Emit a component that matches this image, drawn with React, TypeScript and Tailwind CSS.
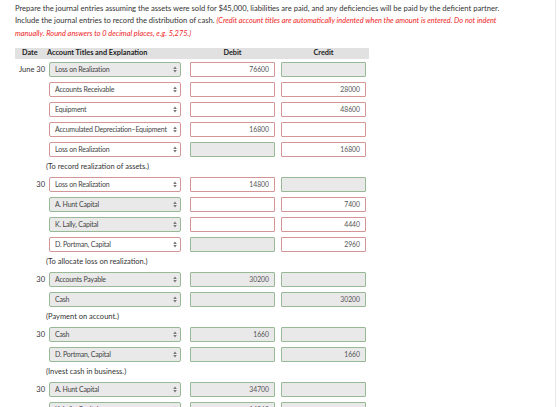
type Tone = "ok" | "bad"

type Line = {
  date?: string
  account: string
  accountTone: Tone
  debit: string
  debitTone: Tone
  credit: string
  creditTone: Tone
}

type Entry = { lines: Line[]; memo?: string }

const ENTRIES: Entry[] = [
  {
    lines: [
      { date: "June 30", account: "Loss on Realization", accountTone: "ok", debit: "76600", debitTone: "bad", credit: "", creditTone: "ok" },
      { account: "Accounts Receivable", accountTone: "bad", debit: "", debitTone: "bad", credit: "28000", creditTone: "bad" },
      { account: "Equipment", accountTone: "bad", debit: "", debitTone: "bad", credit: "48600", creditTone: "bad" },
      { account: "Accumulated Depreciation–Equipment", accountTone: "bad", debit: "16800", debitTone: "bad", credit: "", creditTone: "bad" },
      { account: "Loss on Realization", accountTone: "bad", debit: "", debitTone: "ok", credit: "16800", creditTone: "bad" },
    ],
    memo: "(To record realization of assets.)",
  },
  {
    lines: [
      { date: "30", account: "Loss on Realization", accountTone: "bad", debit: "14800", debitTone: "bad", credit: "", creditTone: "ok" },
      { account: "A. Hunt Capital", accountTone: "ok", debit: "", debitTone: "bad", credit: "7400", creditTone: "bad" },
      { account: "K. Lally, Capital", accountTone: "ok", debit: "", debitTone: "bad", credit: "4440", creditTone: "bad" },
      { account: "D. Portman, Capital", accountTone: "bad", debit: "", debitTone: "ok", credit: "2960", creditTone: "bad" },
    ],
    memo: "(To allocate loss on realization.)",
  },
  {
    lines: [
      { date: "30", account: "Accounts Payable", accountTone: "ok", debit: "30200", debitTone: "ok", credit: "", creditTone: "ok" },
      { account: "Cash", accountTone: "ok", debit: "", debitTone: "ok", credit: "30200", creditTone: "ok" },
    ],
    memo: "(Payment on account.)",
  },
  {
    lines: [
      { date: "30", account: "Cash", accountTone: "ok", debit: "1660", debitTone: "ok", credit: "", creditTone: "ok" },
      { account: "D. Portman, Capital", accountTone: "ok", debit: "", debitTone: "ok", credit: "1660", creditTone: "ok" },
    ],
    memo: "(Invest cash in business.)",
  },
  {
    lines: [
      { date: "30", account: "A. Hunt Capital", accountTone: "ok", debit: "34700", debitTone: "ok", credit: "", creditTone: "ok" },
      { account: "K. Lally, Capital", accountTone: "ok", debit: "14360", debitTone: "ok", credit: "", creditTone: "ok" },
    ],
  },
]

// green = accepted field, red = field flagged for review
const box = (tone: Tone) =>
  tone === "ok"
    ? "border-[#98b996] bg-[#e9e9e9]"
    : "border-[#d39596] bg-white"

function Arrows() {
  return (
    <svg width="4" height="7" viewBox="0 0 4 7" className="shrink-0">
      <path d="M2 0.5 L3.8 3 L0.2 3 Z" fill="#777" />
      <path d="M2 6.5 L3.8 4 L0.2 4 Z" fill="#777" />
    </svg>
  )
}

function AccountSelect({ value, tone }: { value: string; tone: Tone }) {
  return (
    <div className={`ml-[4px] flex h-[15px] w-[132px] items-center justify-between rounded-[2px] border pl-[5px] pr-[3px] ${box(tone)}`}>
      <span className="text-[7px] tracking-[-0.2px] text-[#444]">{value}</span>
      <Arrows />
    </div>
  )
}

function Amount({ value, tone, className }: { value: string; tone: Tone; className: string }) {
  return (
    <div className={`flex h-[15px] w-[85px] items-center justify-end rounded-[1px] border pr-[5px] text-[6.8px] text-[#555] ${box(tone)} ${className}`}>
      {value}
    </div>
  )
}

export default function App() {
  return (
    <div className="h-[407px] w-[560px] overflow-hidden bg-white font-['Lato','Open_Sans',sans-serif] text-[#333]">
      <div className="h-full w-[556px] border-r border-[#e8e8e8] pl-[15px] pt-[2px]">
        <p className="text-[7.6px] leading-[12px]">
          Prepare the journal entries assuming the assets were sold for $45,000, liabilities are paid, and any deficiencies will be paid by the deficient partner.
          <br />
          Include the journal entries to record the distribution of cash.{" "}
          <span className="text-[7.4px] italic text-[#ee1c25]">
            (Credit account titles are automatically indented when the amount is entered. Do not indent
            <br />
            manually. Round answers to 0 decimal places, e.g. 5,275.)
          </span>
        </p>

        <div className="mt-[8px] flex h-[11px] w-[354px] items-center bg-[#e1e1e1] text-[7.3px] font-bold text-[#222]">
          <span className="w-[32px] pl-[7px]">Date</span>
          <span className="w-[134px]">Account Titles and Explanation</span>
          <span className="w-[94px] pl-[9px] text-center">Debit</span>
          <span className="w-[91px] pl-[6px] text-center">Credit</span>
        </div>

        <div className="mt-[3px]">
          {ENTRIES.map((entry, i) => (
            <div key={i}>
              {entry.lines.map((l, j) => (
                <div key={j} className="mb-[5px] flex h-[15px] items-center">
                  <span className="w-[30px] text-right text-[7.5px] text-[#333]">{l.date}</span>
                  <AccountSelect value={l.account} tone={l.accountTone} />
                  <Amount value={l.debit} tone={l.debitTone} className="ml-[9px]" />
                  <Amount value={l.credit} tone={l.creditTone} className="ml-[6px]" />
                </div>
              ))}
              {entry.memo && (
                <div className="mb-[5px] flex h-[10px] items-center pl-[31px] text-[7.5px] text-[#333]">
                  {entry.memo}
                </div>
              )}
            </div>
          ))}
        </div>
      </div>
    </div>
  )
}
